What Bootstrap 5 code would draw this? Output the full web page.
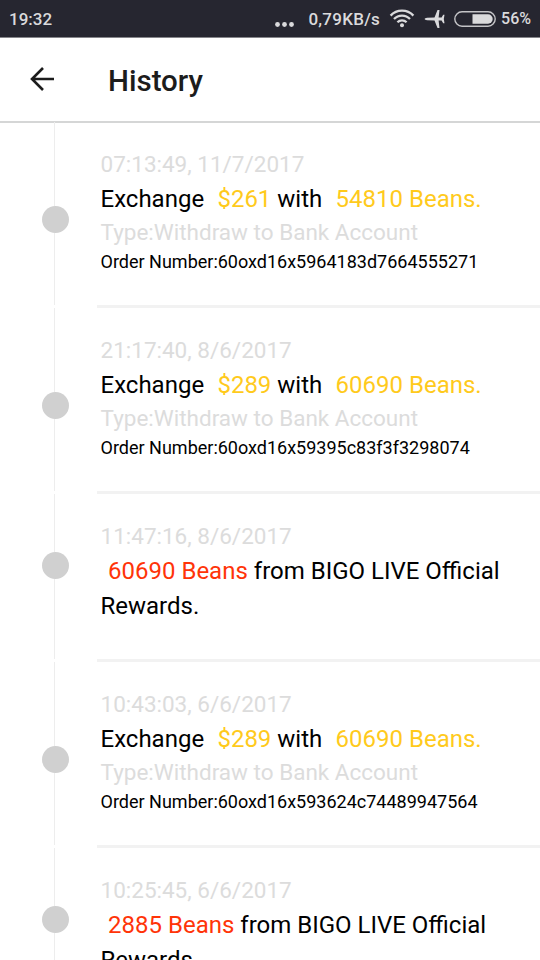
<!DOCTYPE html>
<html lang="en">
<head>
<meta charset="utf-8">
<meta name="viewport" content="width=device-width, initial-scale=1">
<title>History</title>
<link href="https://cdn.jsdelivr.net/npm/bootstrap@5.3.0/dist/css/bootstrap.min.css" rel="stylesheet">
<style>
  body { font-family: Roboto, sans-serif; color: #000; background: #fff; height: 960px; overflow: hidden; }
  .statusbar { height: 38px; background: #262630; color: #dadadc; font-size: 17px; font-weight: 500; line-height: 38px; border-bottom: 1px solid #85858a; padding: 0 9px; }
  .dots { width: 19px; height: 5px; margin: 11px 14px 0 0; }
  .speed { letter-spacing: .25px; }
  .battery { margin: 0 5px 0 9px; }
  .pct { font-size: 16px; }
  .topbar { height: 85px; border-bottom: 2px solid #d5d6d6; padding-left: 29px; }
  .topbar svg { margin-top: -1px; }
  .topbar h1 { font-size: 29.5px; font-weight: 500; color: #1c1c1c; margin: 3px 0 0 53px; line-height: 40px; }
  .history { margin-top: -1px; }
  .entry { height: 186px; }
  .entry.short { height: 168px; }
  .rail { width: 97px; padding-bottom: 3px; }
  .rail-line { width: 1px; margin-left: 54px; background: #ededed; }
  .rail-dot { width: 27px; height: 27px; margin: 11px 0 0 -13px; background: #d0d0d0; border-radius: 50%; }
  .short .rail-dot { margin-top: -22px; }
  .detail { border-bottom: 3px solid #f2f2f2; padding: 27px 0 0 3.5px; }
  .when, .kind { font-size: 22.5px; line-height: 31px; color: #dcdcdc; }
  .when { padding-bottom: 2px; }
  .what { font-size: 24px; line-height: 35px; }
  .order { font-size: 18px; line-height: 28px; }
  .gold { color: #ffca1c; margin-left: 1.4px; }
  .red { color: #ff3408; margin-left: 1.6px; }
</style>
<script src="https://cdn.jsdelivr.net/npm/bootstrap@5.3.0/dist/js/bootstrap.bundle.min.js"></script>
</head>
<body>
<header class="statusbar d-flex align-items-center justify-content-between">
  <span>19:32</span>
  <div class="d-flex align-items-center">
    <svg class="dots" viewBox="0 0 19 5" fill="#dadadc"><circle cx="2.5" cy="2.5" r="2.4"/><circle cx="9.5" cy="2.5" r="2.4"/><circle cx="16.5" cy="2.5" r="2.4"/></svg>
    <span class="speed">0,79KB/s</span>
    <svg class="ms-2 me-2" width="28" height="20" viewBox="0 0 28 20" fill="none" stroke="#dadadc" stroke-width="2.3"><path d="M2.6 6.6a15.5 15.5 0 0 1 22.8 0M6 10a11 11 0 0 1 16 0M9.4 13.3a6.6 6.6 0 0 1 9.2 0"/><circle cx="14" cy="16.2" r="2" fill="#dadadc" stroke="none"/></svg>
    <svg width="21" height="20" viewBox="0 0 21 20" fill="#dadadc"><path d="M.5 10Q.8 9 3 8.8L10.5 8.5 13.5 1H15.5L14.6 8.5 17.6 8.4 19.2 5.7H20.5L19.8 10 20.5 14.3H19.2L17.6 11.6 14.6 11.5 15.5 19H13.5L10.5 11.5 3 11.2Q.8 11 .5 10Z"/></svg>
    <svg class="battery" width="42" height="16" viewBox="0 0 42 16"><rect x=".8" y=".8" width="40.4" height="14.4" rx="7.2" fill="none" stroke="#c4c4c7" stroke-width="1.4"/><path d="M18.5 3.3H34a4.7 4.7 0 0 1 0 9.4H18.5Z" fill="#dadadc"/></svg>
    <span class="pct">56%</span>
  </div>
</header>
<nav class="topbar d-flex align-items-center">
  <svg width="26" height="26" viewBox="0 0 26 26" fill="none" stroke="#1c1c1c" stroke-width="2.6"><path d="M25 13H3M14 2 3 13 14 24"/></svg>
  <h1>History</h1>
</nav>
<main class="history">
  <section class="entry d-flex">
    <div class="rail d-flex align-items-center"><div class="rail-line h-100"></div><div class="rail-dot"></div></div>
    <div class="detail flex-grow-1">
      <div class="when">07:13:49, 11/7/2017</div>
      <div class="what">Exchange &nbsp;<span class="gold">$261</span> with &nbsp;<span class="gold">54810 Beans.</span></div>
      <div class="kind">Type:Withdraw to Bank Account</div>
      <div class="order">Order Number:60oxd16x5964183d7664555271</div>
    </div>
  </section>
  <section class="entry d-flex">
    <div class="rail d-flex align-items-center"><div class="rail-line h-100"></div><div class="rail-dot"></div></div>
    <div class="detail flex-grow-1">
      <div class="when">21:17:40, 8/6/2017</div>
      <div class="what">Exchange &nbsp;<span class="gold">$289</span> with &nbsp;<span class="gold">60690 Beans.</span></div>
      <div class="kind">Type:Withdraw to Bank Account</div>
      <div class="order">Order Number:60oxd16x59395c83f3f3298074</div>
    </div>
  </section>
  <section class="entry short d-flex">
    <div class="rail d-flex align-items-center"><div class="rail-line h-100"></div><div class="rail-dot"></div></div>
    <div class="detail flex-grow-1">
      <div class="when">11:47:16, 8/6/2017</div>
      <div class="what">&nbsp;<span class="red">60690 Beans</span> from BIGO LIVE Official<br>Rewards.</div>
    </div>
  </section>
  <section class="entry d-flex">
    <div class="rail d-flex align-items-center"><div class="rail-line h-100"></div><div class="rail-dot"></div></div>
    <div class="detail flex-grow-1">
      <div class="when">10:43:03, 6/6/2017</div>
      <div class="what">Exchange &nbsp;<span class="gold">$289</span> with &nbsp;<span class="gold">60690 Beans.</span></div>
      <div class="kind">Type:Withdraw to Bank Account</div>
      <div class="order">Order Number:60oxd16x593624c74489947564</div>
    </div>
  </section>
  <section class="entry short d-flex">
    <div class="rail d-flex align-items-center"><div class="rail-line h-100"></div><div class="rail-dot"></div></div>
    <div class="detail flex-grow-1">
      <div class="when">10:25:45, 6/6/2017</div>
      <div class="what">&nbsp;<span class="red">2885 Beans</span> from BIGO LIVE Official<br>Rewards.</div>
    </div>
  </section>
</main>
</body>
</html>
